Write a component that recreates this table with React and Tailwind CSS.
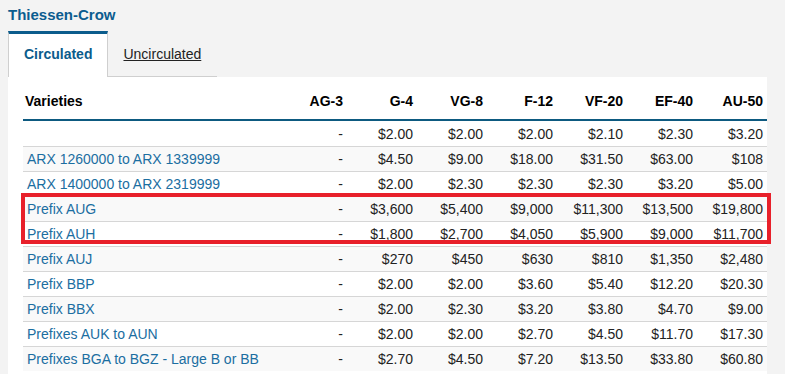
import React from 'react';

const grades = ['AG-3', 'G-4', 'VG-8', 'F-12', 'VF-20', 'EF-40', 'AU-50'];

// price table rows: [variety, ...values per grade]
const rows = [
    ['', '-', '$2.00', '$2.00', '$2.00', '$2.10', '$2.30', '$3.20'],
    ['ARX 1260000 to ARX 1339999', '-', '$4.50', '$9.00', '$18.00', '$31.50', '$63.00', '$108'],
    ['ARX 1400000 to ARX 2319999', '-', '$2.00', '$2.30', '$2.30', '$2.30', '$3.20', '$5.00'],
    ['Prefix AUG', '-', '$3,600', '$5,400', '$9,000', '$11,300', '$13,500', '$19,800'],
    ['Prefix AUH', '-', '$1,800', '$2,700', '$4,050', '$5,900', '$9,000', '$11,700'],
    ['Prefix AUJ', '-', '$270', '$450', '$630', '$810', '$1,350', '$2,480'],
    ['Prefix BBP', '-', '$2.00', '$2.00', '$3.60', '$5.40', '$12.20', '$20.30'],
    ['Prefix BBX', '-', '$2.00', '$2.30', '$3.20', '$3.80', '$4.70', '$9.00'],
    ['Prefixes AUK to AUN', '-', '$2.00', '$2.00', '$2.70', '$4.50', '$11.70', '$17.30'],
    ['Prefixes BGA to BGZ - Large B or BB', '-', '$2.70', '$4.50', '$7.20', '$13.50', '$33.80', '$60.80'],
];

const App = () => {
    return (
        <div
            className="relative min-h-[374px] bg-[#f3f3f3] pl-[8px] flex flex-col text-[14px] leading-[16px] text-[#222]"
            style={{ fontFamily: '"Liberation Sans", Arial, sans-serif' }}
        >
            <h1 className="pt-[6px] text-[15px] leading-[18px] font-bold text-[#0b5c8f]">Thiessen-Crow</h1>

            {/* Tabs */}
            <div className="mt-[7px] flex">
                <div className="h-[46px] bg-white border-t-[3px] border-x border-t-[#0b5c8c] border-x-[#cfcfcf] px-[15px] pt-[12px] font-bold text-[#0b5c8c]">
                    Circulated
                </div>
                <div className="h-[46px] border-b border-[#cfcfcf] pl-[15px] pr-[16px] pt-[15px] underline text-[#222]">
                    Uncirculated
                </div>
            </div>

            {/* Price table */}
            <div className="w-[759px] flex-1 bg-white pl-[15px]">
                <div className="w-[744px]">
                    <div className="grid grid-cols-[1fr_repeat(7,70px)] h-[44px] border-b-2 border-[#0d5a80] font-bold text-black">
                        <div className="pl-[2px] pt-[16px]">Varieties</div>
                        {grades.map(g => (
                            <div key={g} className="pr-[4px] pt-[16px] text-right">{g}</div>
                        ))}
                    </div>
                    {rows.map((r, i) => (
                        <div
                            key={i}
                            className={`grid grid-cols-[1fr_repeat(7,70px)] h-[25px] items-center ${i > 0 ? 'border-t border-[#d6d6d6]' : 'h-[24px]'} ${i % 2 === 1 ? 'bg-[#f9f9f9]' : 'bg-white'}`}
                        >
                            <div className="pl-[4px] text-[#1b6ea1]">{r[0]}</div>
                            {r.slice(1).map((v, j) => (
                                <div key={j} className="pr-[4px] text-right">{v}</div>
                            ))}
                        </div>
                    ))}
                </div>
            </div>

            {/* red highlight box */}
            <div className="absolute left-[21px] top-[193px] w-[750px] h-[51px] border-4 border-[#e8202a] pointer-events-none"></div>
        </div>
    );
};

export default App;
